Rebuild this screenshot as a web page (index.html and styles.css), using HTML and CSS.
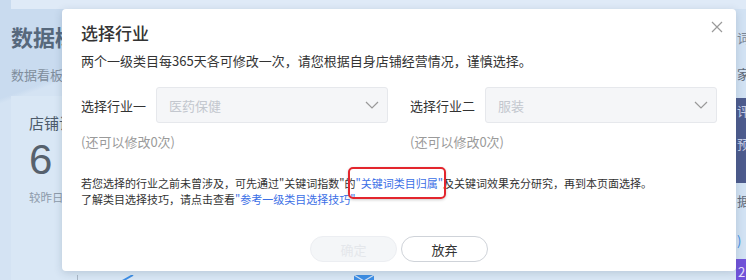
FILE: index.html
```html
<!DOCTYPE html>
<html lang="zh-CN">
<head>
  <meta charset="UTF-8">
  <meta name="viewport" content="width=device-width, initial-scale=1.0">
  <title>选择行业</title>
  <link rel="stylesheet" href="styles.css">
</head>
<body>
  <!-- Page behind the dialog -->
  <div class="page">
    <div class="main">
      <div class="topbar"></div>
      <div class="head">
        <h1>数据概览</h1>
        <p>数据看板</p>
      </div>
      <div class="cards">
        <div class="card">
          <div class="card-title">店铺访客</div>
          <div class="card-num">6</div>
          <div class="card-sub">较昨日</div>
          <div class="chart">
            <span class="chart-line"></span>
            <svg class="chart-check" width="16" height="8" viewBox="0 0 16 8"><path d="M1 8 L6 5 L15 0" fill="none" stroke="#3d8ee5" stroke-width="2"/></svg>
            <svg class="chart-mail" width="20" height="8" viewBox="0 0 20 8"><rect x="0" y="0" width="20" height="8" fill="#3d8ee5"/><path d="M0 0 L10 6 L20 0" fill="none" stroke="#cfe0f3" stroke-width="1.2"/></svg>
          </div>
        </div>
      </div>
    </div>
    <aside class="side">
      <div class="side-top"></div>
      <div class="side-item s1">词</div>
      <div class="side-item s2">家</div>
      <div class="side-dark">
        <div class="side-item d1">评</div>
        <div class="side-item d2">预</div>
      </div>
      <div class="side-item s3">据</div>
      <div class="side-item s4">)</div>
      <div class="side-purple">2</div>
    </aside>
  </div>

  <!-- Dialog -->
  <div class="modal">
    <svg class="close" width="12" height="12" viewBox="0 0 12 12"><path d="M1 1 L11 11 M11 1 L1 11" stroke="#9a9a9a" stroke-width="1.2"/></svg>
    <h2 class="modal-title">选择行业</h2>
    <p class="modal-desc">两个一级类目每365天各可修改一次，请您根据自身店铺经营情况，谨慎选择。</p>

    <div class="fields">
      <div class="field">
        <div class="field-row">
          <label>选择行业一</label>
          <div class="select">
            <span>医药保健</span>
            <svg width="14" height="8" viewBox="0 0 14 8"><path d="M1 1 L7 7 L13 1" fill="none" stroke="#999" stroke-width="1.2"/></svg>
          </div>
        </div>
        <div class="hint">(还可以修改0次)</div>
      </div>
      <div class="field">
        <div class="field-row">
          <label>选择行业二</label>
          <div class="select">
            <span>服装</span>
            <svg width="14" height="8" viewBox="0 0 14 8"><path d="M1 1 L7 7 L13 1" fill="none" stroke="#999" stroke-width="1.2"/></svg>
          </div>
        </div>
        <div class="hint">(还可以修改0次)</div>
      </div>
    </div>

    <div class="notes">
      <p>若您选择的行业之前未曾涉及，可先通过"关键词指数"的<a class="link marked">"关键词类目归属"</a>及关键词效果充分研究，再到本页面选择。</p>
      <p>了解类目选择技巧，请点击查看<a class="link">"参考一级类目选择技巧"</a></p>
    </div>

    <div class="footer">
      <button class="btn btn-disabled" disabled>确定</button>
      <button class="btn">放弃</button>
    </div>
  </div>
</body>
</html>
```

FILE: styles.css
```css
body {
  margin: 0;
  width: 746px;
  height: 280px;
  overflow: hidden;
  font-family: "Noto Sans CJK SC", "Noto Sans", sans-serif;
  background: #d2e2f3;
}

/* Page behind the dialog */
.page {
  display: flex;
  height: 280px;
}
.main {
  flex: 1;
  padding-left: 11px;
  background: linear-gradient(160deg, #c9dbef 0%, #c9dbef 18%, #d4e3f3 19%, #d4e3f3 100%);
}
.topbar {
  height: 9px;
  background: #dfeaf7;
}
.head {
  margin-top: 12px;
}
.head h1 {
  margin: 0;
  font-size: 22px;
  line-height: 30px;
  font-weight: bold;
  color: #56687c;
}
.head p {
  margin: 15px 0 0;
  font-size: 13px;
  line-height: 18px;
  color: #7f8d9c;
}
.cards {
  margin-top: 12px;
  display: flex;
}
.card {
  flex: 1;
  padding: 17px 0 0 18px;
  background: #d9e7f5;
  height: 170px;
}
.card-title {
  font-size: 15px;
  line-height: 20px;
  color: #4d5b6a;
}
.card-num {
  margin-top: 4px;
  font-family: "Liberation Sans", Arial, sans-serif;
  font-size: 42px;
  line-height: 46px;
  color: #56616d;
}
.card-sub {
  margin-top: 6px;
  font-size: 11.5px;
  line-height: 16px;
  color: #8e9baa;
}
.chart {
  margin-top: 70px;
  display: flex;
  align-items: flex-end;
  height: 8px;
}
.chart-line {
  width: 1px;
  height: 8px;
  margin-left: 48px;
  background: #aab7c6;
}
.chart-check {
  margin-left: 40px;
}
.chart-mail {
  margin-left: 220px;
}

.side {
  width: 10px;
  overflow: hidden;
  white-space: nowrap;
  font-size: 13px;
}
.side-top {
  height: 9px;
  background: #dfeaf7;
}
.side-item {
  height: 20px;
  line-height: 20px;
  padding-left: 1px;
  color: #7a8696;
}
.s1 { margin-top: 19px; }
.s2 { margin-top: 16px; color: #5f6b7b; }
.side-dark {
  margin-top: 14px;
  height: 85px;
  background: #4d5b8d;
}
.d1 { padding-top: 3px; color: #c9d0e8; }
.d2 { margin-top: 13px; color: #c9d0e8; }
.s3 { margin-top: 8px; color: #5f6b7b; }
.s4 { margin-top: 20px; color: #3d8ee5; }
.side-purple {
  margin-top: 8px;
  height: 22px;
  line-height: 26px;
  padding-left: 2px;
  background: #7153d9;
  color: #e6e0fb;
}

/* Dialog */
.modal {
  position: absolute;
  left: 62px;
  top: 9px;
  width: 674px;
  box-sizing: border-box;
  padding: 12px 19px 9px;
  background: #fff;
  border-radius: 4px;
  box-shadow: 0 2px 8px rgba(40, 60, 90, 0.18);
}
.close {
  position: absolute;
  top: 12px;
  right: 13px;
}
.modal-title {
  margin: 0;
  font-size: 17px;
  line-height: 24px;
  font-weight: 500;
  color: #333;
}
.modal-desc {
  margin: 6px 0 0;
  font-size: 13px;
  line-height: 20px;
  color: #333;
}
.fields {
  margin-top: 16px;
  display: grid;
  grid-template-columns: 307px 307px;
  gap: 22px;
}
.field-row {
  display: flex;
  align-items: center;
  gap: 10px;
}
.field-row label {
  width: 65px;
  font-size: 13px;
  color: #333;
  white-space: nowrap;
}
.select {
  flex: 1;
  height: 36px;
  box-sizing: border-box;
  display: flex;
  align-items: center;
  justify-content: space-between;
  padding: 0 8px 0 12px;
  background: #f5f6f8;
  border: 1px solid #e6e8ec;
  border-radius: 3px;
  font-size: 13px;
  color: #c3c7ce;
}
.hint {
  margin-top: 10px;
  font-size: 13px;
  line-height: 18px;
  color: #9a9a9a;
}
.notes {
  margin-top: 24px;
  font-size: 11px;
  line-height: 16px;
  color: #333;
}
.notes p {
  margin: 0;
  white-space: nowrap;
}
.link {
  color: #3b6fe6;
}
.marked {
  position: relative;
}
.marked::after {
  content: "";
  position: absolute;
  left: -7px;
  right: -3px;
  top: -8px;
  bottom: -8px;
  border: 2px solid #e3262d;
  border-radius: 5px;
  box-shadow: 0 1px 3px rgba(0, 0, 0, 0.2);
}
.footer {
  margin-top: 29px;
  display: flex;
  justify-content: center;
  gap: 4px;
}
.btn {
  width: 87px;
  height: 26px;
  padding: 0;
  font-family: inherit;
  font-size: 13px;
  color: #333;
  background: #fff;
  border: 1px solid #cfd3d9;
  border-radius: 13px;
}
.btn-disabled {
  background: #f4f6f8;
  border-color: #eceef2;
  color: #e4e7eb;
}
```
